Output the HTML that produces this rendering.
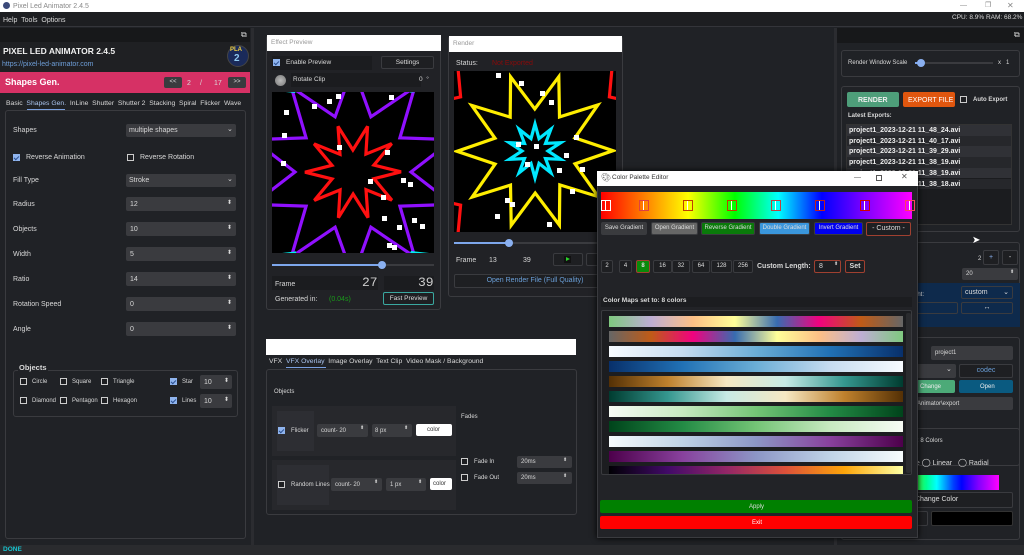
<!DOCTYPE html>
<html><head><meta charset="utf-8"><style>
*{margin:0;padding:0;box-sizing:border-box}
body{width:1024px;height:555px;overflow:hidden;background:#202226;font-family:"Liberation Sans",sans-serif;position:relative;color:#ddd}
div,span{position:absolute}
.t{font-size:7px;color:#d8d8d8;white-space:nowrap;line-height:1}
.b{font-weight:bold}
.box{border:1px solid #3a3b3f;border-radius:3px}
.in{background:#3a3b3f;border-radius:2px}
.ar{font-size:4px;line-height:3px;color:#ddd;text-align:center;width:6px}
.cb{width:7px;height:7px;border:1px solid #ccc;background:#1e1f22}
.cbk{width:7px;height:7px;background:#8fb4ee;border:1px solid #8fb4ee}
.cbk:after{content:"";position:absolute;left:1px;top:0px;width:2px;height:4px;border:solid #2a4f90;border-width:0 1px 1px 0;transform:rotate(45deg)}
.btn{border:1px solid #3a3b3f;border-radius:2px;background:#1e1f22;font-size:7px;color:#ddd;text-align:center;white-space:nowrap}
.stripe{left:7px;width:294px;height:11px}
</style></head><body>
<!-- title bar -->
<div style="left:0;top:0;width:1024px;height:12px;background:#fff"></div>
<div style="left:3px;top:2px;width:7px;height:7px;border-radius:50%;background:#3b4a7a"></div>
<div class="t" style="left:13px;top:3px;font-size:7px;color:#888">Pixel Led Animator 2.4.5</div>
<div class="t" style="left:960px;top:2px;color:#888">—</div>
<div class="t" style="left:985px;top:2px;color:#888">❐</div>
<div class="t" style="left:1007px;top:2px;color:#888;font-size:8px">✕</div>
<!-- menu -->
<div style="left:0;top:12px;width:1024px;height:15px;background:#1d1e21;border-bottom:1px solid #34353a"></div>
<div class="t" style="left:3px;top:17px">Help&nbsp; Tools&nbsp; Options</div>
<div class="t" style="left:952px;top:15px;font-size:6.5px">CPU: 8.9% RAM: 68.2%</div>

<!-- LEFT DOCK -->
<div style="left:0;top:28px;width:250px;height:14px;background:#17181a"></div>
<div class="t" style="left:241px;top:31px;font-size:8px">⧉</div>
<div style="left:0;top:42px;width:250px;height:30px;background:#1f2023"></div>
<div class="t b" style="left:3px;top:47px;font-size:8.5px;color:#f0f0f0">PIXEL LED ANIMATOR 2.4.5</div>
<div class="t" style="left:2px;top:61px;font-size:7px;color:#6e9ed8">https://pixel-led-animator.com</div>
<div style="left:227px;top:45px;width:22px;height:22px;border-radius:50%;background:#1a2a5a;border:1px solid #444"></div>
<div class="t b" style="left:230px;top:47px;font-size:6px;color:#f0d040">PLA</div>
<div class="t b" style="left:234px;top:54px;font-size:10px;color:#8fc8f0">2</div>
<div style="left:0;top:72px;width:250px;height:21px;background:#d63165"></div>
<div class="t b" style="left:5px;top:78px;font-size:9px;color:#fff">Shapes Gen.</div>
<div class="btn" style="left:164px;top:77px;width:18px;height:11px;background:#3a3b3f;border:none;line-height:11px;font-size:6px">&lt;&lt;</div>
<div class="t" style="left:187px;top:80px">2</div>
<div class="t" style="left:200px;top:80px">/</div>
<div class="t" style="left:214px;top:80px">17</div>
<div class="btn" style="left:228px;top:77px;width:18px;height:11px;background:#3a3b3f;border:none;line-height:11px;font-size:6px">&gt;&gt;</div>
<div class="t" style="left:6px;top:101px;font-size:6.8px">Basic&nbsp; <span style="position:static;color:#aac4ee">Shapes Gen.</span>&nbsp; InLine&nbsp; Shutter&nbsp; Shutter 2&nbsp; Stacking&nbsp; Spiral&nbsp; Flicker&nbsp; Wave</div>
<div style="left:27px;top:109px;width:38px;height:1px;background:#7aa0e0"></div>
<div class="box" style="left:5px;top:110px;width:241px;height:429px"></div>

<div class="t" style="left:13px;top:127px">Shapes</div>
<div class="in" style="left:126px;top:124px;width:110px;height:13px"></div>
<div class="t" style="left:129px;top:127px">multiple shapes</div>
<div class="t" style="left:227px;top:126px;font-size:7px">⌄</div>
<div class="cbk" style="left:13px;top:154px"></div>
<div class="t" style="left:26px;top:154px">Reverse Animation</div>
<div class="cb" style="left:127px;top:154px"></div>
<div class="t" style="left:140px;top:154px">Reverse Rotation</div>
<div class="t" style="left:13px;top:177px">Fill Type</div>
<div class="in" style="left:126px;top:174px;width:110px;height:13px"></div>
<div class="t" style="left:129px;top:177px">Stroke</div>
<div class="t" style="left:227px;top:176px">⌄</div>

<div id="spins"></div>

<div class="box" style="left:13px;top:370px;width:225px;height:47px"></div>
<div style="left:18px;top:364px;width:30px;height:8px;background:#202226"></div>
<div class="t b" style="left:19px;top:364px;font-size:7.5px">Objects</div>
<div id="objs"></div>

<div style="left:251px;top:28px;width:3px;height:517px;background:#2b2c30"></div>

<!-- EFFECT PREVIEW -->
<div class="box" style="left:266px;top:35px;width:175px;height:275px;background:#212226"></div>
<div style="left:267px;top:35px;width:174px;height:16px;background:#fff"></div>
<div class="t" style="left:271px;top:40px;color:#999;font-size:6.5px">Effect Preview</div>
<div style="left:272px;top:56px;width:100px;height:14px;background:#1b1c1f"></div>
<div class="cbk" style="left:273px;top:59px"></div>
<div class="t" style="left:286px;top:60px;font-size:6.5px">Enable Preview</div>
<div class="btn" style="left:381px;top:56px;width:53px;height:13px;line-height:11px;font-size:6.5px">Settings</div>
<div style="left:275px;top:75px;width:11px;height:11px;border-radius:50%;background:radial-gradient(#bbb,#777)"></div>
<div style="left:291px;top:73px;width:130px;height:14px;background:#1b1c1f"></div>
<div class="t" style="left:293px;top:77px;font-size:6.5px">Rotate Clip</div>
<div class="t" style="left:419px;top:77px;font-size:6.5px">0&nbsp; °</div>
<svg id="c1" style="position:absolute;left:272px;top:92px" width="162" height="161"></svg>
<div style="left:272px;top:264px;width:162px;height:2px;background:#3a3b3f"></div>
<div style="left:272px;top:264px;width:110px;height:2px;background:#7ea7ec"></div>
<div style="left:378px;top:261px;width:8px;height:8px;border-radius:50%;background:#8ab0f0"></div>
<div style="left:272px;top:276px;width:60px;height:14px;background:#1b1c1f"></div>
<div class="t" style="left:275px;top:281px">Frame</div>
<div style="left:328px;top:276px;width:50px;height:14px;background:#1b1c1f"></div>
<div class="t" style="left:362px;top:276px;font-family:'Liberation Mono',monospace;font-size:13px;color:#ccc">27</div>
<div style="left:384px;top:276px;width:50px;height:14px;background:#1b1c1f"></div>
<div class="t" style="left:418px;top:276px;font-family:'Liberation Mono',monospace;font-size:13px;color:#ccc">39</div>
<div class="t" style="left:275px;top:296px">Generated in:</div>
<div class="t" style="left:329px;top:296px;color:#1a9a1a">(0.04s)</div>
<div class="btn" style="left:383px;top:292px;width:51px;height:13px;line-height:11px;border-color:#3aa8a0;font-size:6.5px">Fast Preview</div>

<!-- RENDER -->
<div class="box" style="left:448px;top:36px;width:175px;height:261px;background:#212226"></div>
<div style="left:449px;top:36px;width:173px;height:16px;background:#fff"></div>
<div class="t" style="left:453px;top:41px;color:#999;font-size:6.5px">Render</div>
<div class="t" style="left:456px;top:60px">Status:</div>
<div class="t" style="left:492px;top:60px;color:#8a0a0a">Not Exported</div>
<svg id="c2" style="position:absolute;left:454px;top:71px" width="162" height="161"></svg>
<div style="left:454px;top:242px;width:168px;height:2px;background:#3a3b3f"></div>
<div style="left:454px;top:242px;width:55px;height:2px;background:#7ea7ec"></div>
<div style="left:505px;top:239px;width:8px;height:8px;border-radius:50%;background:#8ab0f0"></div>
<div class="t" style="left:456px;top:257px">Frame</div>
<div class="t" style="left:489px;top:257px">13</div>
<div class="t" style="left:523px;top:257px">39</div>
<div class="btn" style="left:553px;top:253px;width:30px;height:13px"></div>
<div style="left:564px;top:256px;width:7px;height:7px;background:#111"></div>
<div style="left:566px;top:257px;width:0;height:0;border-left:4px solid #2ad02a;border-top:2.5px solid transparent;border-bottom:2.5px solid transparent"></div>
<div class="btn" style="left:586px;top:253px;width:30px;height:13px"></div>
<div class="btn" style="left:454px;top:274px;width:162px;height:14px;line-height:12px;color:#6a9fd8">Open Render File (Full Quality)</div>

<!-- VFX -->
<div style="left:266px;top:339px;width:310px;height:16px;background:#fff"></div>
<div class="t" style="left:269px;top:359px;font-size:6.8px">VFX&nbsp; <span style="position:static;color:#aac4ee">VFX Overlay</span>&nbsp; Image Overlay&nbsp; Text Clip&nbsp; Video Mask / Background</div>
<div style="left:286px;top:367px;width:40px;height:1px;background:#7aa0e0"></div>
<div class="box" style="left:266px;top:369px;width:311px;height:146px"></div>
<div class="t" style="left:274px;top:389px;font-size:6px">Objects</div>
<div style="left:272px;top:406px;width:184px;height:50px;background:#27282c"></div>
<div style="left:277px;top:411px;width:37px;height:40px;background:#2d2e33"></div>
<div class="cbk" style="left:278px;top:427px"></div>
<div class="t" style="left:291px;top:428px;font-size:6px">Flicker</div>
<div class="in" style="left:317px;top:424px;width:51px;height:13px"></div>
<div class="t" style="left:321px;top:428px;font-size:6px">count- 20</div>
<div class="t" style="left:360px;top:426px;font-size:5px">⬍</div>
<div class="in" style="left:372px;top:424px;width:40px;height:13px"></div>
<div class="t" style="left:375px;top:428px;font-size:6px">8 px</div>
<div class="t" style="left:404px;top:426px;font-size:5px">⬍</div>
<div style="left:416px;top:424px;width:36px;height:12px;background:#fff;border-radius:2px"></div>
<div class="t" style="left:427px;top:427px;font-size:6px;color:#333">color</div>
<div style="left:272px;top:460px;width:184px;height:50px;background:#27282c"></div>
<div style="left:277px;top:465px;width:52px;height:40px;background:#2d2e33"></div>
<div class="cb" style="left:278px;top:481px"></div>
<div class="t" style="left:291px;top:482px;font-size:6px">Random Lines</div>
<div class="in" style="left:331px;top:478px;width:51px;height:13px"></div>
<div class="t" style="left:335px;top:482px;font-size:6px">count- 20</div>
<div class="t" style="left:374px;top:480px;font-size:5px">⬍</div>
<div class="in" style="left:386px;top:478px;width:40px;height:13px"></div>
<div class="t" style="left:390px;top:482px;font-size:6px">1 px</div>
<div class="t" style="left:418px;top:480px;font-size:5px">⬍</div>
<div style="left:430px;top:478px;width:22px;height:12px;background:#fff;border-radius:2px"></div>
<div class="t" style="left:433px;top:481px;font-size:6px;color:#333">color</div>
<div class="t" style="left:461px;top:414px;font-size:6px">Fades</div>
<div class="cb" style="left:461px;top:458px"></div>
<div class="t" style="left:474px;top:459px;font-size:6px">Fade In</div>
<div class="in" style="left:517px;top:456px;width:55px;height:12px"></div>
<div class="t" style="left:521px;top:459px;font-size:6px">20ms</div>
<div class="t" style="left:563px;top:458px;font-size:5px">⬍</div>
<div class="cb" style="left:461px;top:474px"></div>
<div class="t" style="left:474px;top:475px;font-size:6px">Fade Out</div>
<div class="in" style="left:517px;top:472px;width:55px;height:12px"></div>
<div class="t" style="left:521px;top:475px;font-size:6px">20ms</div>
<div class="t" style="left:563px;top:474px;font-size:5px">⬍</div>

<!-- RIGHT DOCK -->
<div style="left:834px;top:28px;width:3px;height:517px;background:#2b2c30"></div>
<div style="left:837px;top:28px;width:187px;height:15px;background:#17181a"></div>
<div class="t" style="left:1014px;top:31px;font-size:8px">⧉</div>
<div class="box" style="left:841px;top:50px;width:179px;height:27px"></div>
<div class="t" style="left:848px;top:60px;font-size:6px">Render Window Scale</div>
<div style="left:915px;top:62px;width:78px;height:2px;background:#3a3b3f"></div>
<div style="left:915px;top:62px;width:7px;height:2px;background:#7ea7ec"></div>
<div style="left:917px;top:59px;width:8px;height:8px;border-radius:50%;background:#8ab0f0"></div>
<div class="t" style="left:998px;top:60px;font-size:6px">x&nbsp;&nbsp; 1</div>
<div class="box" style="left:841px;top:86px;width:179px;height:146px"></div>
<div style="left:847px;top:92px;width:52px;height:15px;background:#4e9e7a;border-radius:2px"></div>
<div class="t b" style="left:858px;top:97px;font-size:7px;color:#eee">RENDER</div>
<div style="left:903px;top:92px;width:52px;height:15px;background:#e0560e;border-radius:2px"></div>
<div class="t" style="left:908px;top:97px;font-size:7px;color:#fff">EXPORT FILE</div>
<div class="cb" style="left:960px;top:96px"></div>
<div class="t b" style="left:973px;top:97px;font-size:6px">Auto Export</div>
<div class="t b" style="left:848px;top:113px;font-size:6px">Latest Exports:</div>
<div style="left:846px;top:124px;width:166px;height:101px;background:#1b1c1f;border:1px solid #333"></div>
<div id="exports"></div>
<div class="box" style="left:841px;top:242px;width:179px;height:85px"></div>
<div class="t" style="left:978px;top:256px;font-size:6px">2&nbsp;&nbsp; s</div>
<div class="btn" style="left:983px;top:250px;width:16px;height:15px;line-height:13px;color:#8ab0f0">+</div>
<div class="btn" style="left:1002px;top:250px;width:16px;height:15px;line-height:13px">-</div>
<div class="in" style="left:962px;top:268px;width:56px;height:12px"></div>
<div class="t" style="left:966px;top:271px;font-size:6px">20</div>
<div class="t" style="left:1010px;top:270px;font-size:5px">⬍</div>
<div style="left:912px;top:283px;width:108px;height:44px;background:#0e2a4c"></div>
<div class="t" style="left:914px;top:292px;font-size:6px">ght:</div>
<div class="btn" style="left:961px;top:286px;width:52px;height:13px;background:transparent;line-height:11px;text-align:left;padding-left:3px">custom<span style="right:3px;top:0">⌄</span></div>
<div class="btn" style="left:912px;top:302px;width:46px;height:12px;background:transparent;text-align:left;line-height:10px">0</div>
<div class="btn" style="left:961px;top:302px;width:52px;height:12px;background:transparent;line-height:10px">↔</div>
<div class="box" style="left:841px;top:337px;width:179px;height:129px"></div>
<div class="in" style="left:931px;top:346px;width:82px;height:14px"></div>
<div class="t" style="left:935px;top:350px;font-size:6px">project1</div>
<div class="in" style="left:910px;top:364px;width:46px;height:14px"></div>
<div class="t" style="left:946px;top:366px;font-size:7px">⌄</div>
<div class="btn" style="left:959px;top:364px;width:54px;height:14px;line-height:12px;color:#6a9fd8">codec</div>
<div style="left:912px;top:380px;width:43px;height:13px;background:#4caa78;border-radius:2px"></div>
<div class="t" style="left:920px;top:384px;font-size:6px;color:#eee">Change</div>
<div style="left:959px;top:380px;width:54px;height:13px;background:#0a5a80;border-radius:2px"></div>
<div class="t" style="left:980px;top:384px;font-size:6px;color:#eee">Open</div>
<div class="in" style="left:912px;top:397px;width:101px;height:13px"></div>
<div class="t" style="left:917px;top:401px;font-size:6px">Animator\export</div>
<div class="box" style="left:841px;top:428px;width:179px;height:112px"></div>
<div class="t" style="left:912px;top:438px;font-size:6px">th: 8 Colors</div>
<div class="t" style="left:912px;top:459px;font-size:7px">ge <span style="position:static;font-size:8px">◯</span> Linear&nbsp;&nbsp; <span style="position:static;font-size:8px">◯</span> Radial</div>
<div style="left:916px;top:475px;width:83px;height:15px;background:linear-gradient(90deg,#40ff40,#00ff90,#00ffff 25%,#0040ff 45%,#0000ff 55%,#8000ff 75%,#ff00ff)"></div>
<div class="btn" style="left:908px;top:492px;width:105px;height:16px;line-height:14px;text-align:left;padding-left:6px;font-size:7px">Change Color</div>
<div class="btn" style="left:905px;top:511px;width:23px;height:15px"></div>
<div style="left:931px;top:511px;width:82px;height:15px;background:#000;border:1px solid #333;border-radius:2px"></div>

<!-- cursor -->
<div class="t" style="left:972px;top:236px;font-size:10px;color:#fff">➤</div>

<!-- DIALOG -->
<div style="left:597px;top:171px;width:321px;height:367px;background:#222327;border:1px solid #3a3b3f;box-shadow:0 0 6px #000"></div>
<div style="left:597px;top:171px;width:321px;height:15px;background:#fff"></div>
<div class="t" style="left:601px;top:174px;font-size:8px;color:#555">🎨︎</div>
<div class="t" style="left:612px;top:175px;font-size:6.5px;color:#333">Color Palette Editor</div>
<div class="t" style="left:854px;top:174px;color:#555">—</div>
<div style="left:876px;top:175px;width:6px;height:6px;border:1px solid #555"></div>
<div class="t" style="left:901px;top:173px;font-size:8px;color:#555">✕</div>
<div style="left:601px;top:192px;width:311px;height:27px;background:linear-gradient(90deg,#ff0000,#ff8000 14%,#ffff00 28%,#00ff00 43%,#00ffff 57%,#0000ff 71%,#8000ff 85%,#ff00ff)"></div>
<div id="marks"></div>
<div class="btn" style="left:601px;top:222px;width:46px;height:13px;line-height:11px;background:#3a3b3e;font-size:6px">Save Gradient</div>
<div class="btn" style="left:651px;top:222px;width:47px;height:13px;line-height:11px;background:#666;font-size:6px">Open Gradient</div>
<div class="btn" style="left:701px;top:222px;width:54px;height:13px;line-height:11px;background:#0a7a0a;font-size:6px">Reverse Gradient</div>
<div class="btn" style="left:759px;top:222px;width:51px;height:13px;line-height:11px;background:#3a96dc;font-size:6px">Double Gradient</div>
<div class="btn" style="left:814px;top:222px;width:49px;height:13px;line-height:11px;background:#0000ee;font-size:6px">Invert Gradient</div>
<div class="btn" style="left:866px;top:222px;width:45px;height:14px;line-height:12px;border-color:#a04030;font-size:7px">- Custom -</div>
<div id="nums"></div>
<div class="t b" style="left:757px;top:263px;font-size:7px">Custom Length:</div>
<div class="btn" style="left:814px;top:260px;width:27px;height:13px;border-color:#a04030;text-align:left;padding-left:4px;line-height:11px">8</div>
<div class="t" style="left:834px;top:262px;font-size:5px">⬍</div>
<div class="btn" style="left:845px;top:260px;width:20px;height:13px;border-color:#a04030;line-height:11px;font-weight:bold">Set</div>
<div style="left:601px;top:297px;width:311px;height:10px;background:#1c1d20"></div>
<div class="t b" style="left:603px;top:298px;font-size:6.5px">Color Maps set to: 8 colors</div>
<div style="left:601px;top:310px;width:311px;height:165px;background:#1c1d20;border:1px solid #3a3b3f;border-radius:2px;overflow:hidden" id="maps"></div>
<div style="left:600px;top:500px;width:312px;height:13px;background:#008000;border-radius:2px"></div>
<div class="t" style="left:749px;top:504px;font-size:6px;color:#ddd">Apply</div>
<div style="left:600px;top:516px;width:312px;height:13px;background:#ff0000;border-radius:2px"></div>
<div class="t" style="left:752px;top:520px;font-size:6px;color:#fff">Exit</div>

<!-- status bar -->
<div style="left:0;top:545px;width:1024px;height:10px;background:#2a2b2e"></div>
<div class="t b" style="left:3px;top:547px;font-size:6.5px;color:#17c5d0">DONE</div>

<script>
function h(p,s){p.insertAdjacentHTML('beforeend',s)}
var sp=document.getElementById('spins');
[['Radius','12',204],['Objects','10',229],['Width','5',254],['Ratio','14',279],['Rotation Speed','0',304],['Angle','0',329]].forEach(function(r){
h(sp,'<div class="t" style="left:13px;top:'+(r[2]-3)+'px">'+r[0]+'</div><div class="in" style="left:126px;top:'+(r[2]-7)+'px;width:110px;height:14px"></div><div class="t" style="left:130px;top:'+(r[2]-3)+'px">'+r[1]+'</div><div class="t" style="left:227px;top:'+(r[2]-4)+'px;font-size:6px">⬍</div>')});
var ob=document.getElementById('objs');
[['Circle',20,382,0],['Square',60,382,0],['Triangle',101,382,0],['Diamond',20,401,0],['Pentagon',60,401,0],['Hexagon',101,401,0],['Star',170,382,1],['Lines',170,401,1]].forEach(function(o){
h(ob,'<div class="'+(o[3]?'cbk':'cb')+'" style="left:'+o[1]+'px;top:'+(o[2]-4)+'px"></div><div class="t" style="left:'+(o[1]+12)+'px;top:'+(o[2]-3)+'px;font-size:6px">'+o[0]+'</div>')});
[382,401].forEach(function(y){h(ob,'<div class="in" style="left:200px;top:'+(y-7)+'px;width:32px;height:14px"></div><div class="t" style="left:204px;top:'+(y-3)+'px">10</div><div class="t" style="left:224px;top:'+(y-4)+'px;font-size:6px">⬍</div>')});
var ex=document.getElementById('exports');
['11_48_24','11_40_17','11_39_29','11_38_19','11_38_19','11_38_18'].forEach(function(s,i){
h(ex,'<div style="left:847px;top:'+(125+i*10.7)+'px;width:164px;height:10.7px;background:'+(i%2?'#26272b':'#303136')+'"></div><div class="t b" style="left:849px;top:'+(127+i*10.7)+'px;font-size:7px;color:#eee">project1_2023-12-21 '+s+'.avi</div>')});
var mk=document.getElementById('marks');
[[601,'#fff'],[639,'#e04040'],[683,'#c04000'],[727,'#c04000'],[771,'#c04040'],[815,'#c02020'],[860,'#d00000'],[905,'#ff4060']].forEach(function(m){
h(mk,'<div style="left:'+m[0]+'px;top:200px;width:10px;height:11px;border:1px solid '+m[1]+'"></div><div style="left:'+(m[0]+4)+'px;top:201px;width:1px;height:9px;background:#fff"></div>')});
var nu=document.getElementById('nums');
[[601,12,'2'],[619,13,'4'],[636,14,'8'],[653,19,'16'],[672,18,'32'],[692,18,'64'],[711,21,'128'],[733,20,'256']].forEach(function(n){
h(nu,'<div class="btn" style="left:'+n[0]+'px;top:260px;width:'+n[1]+'px;height:13px;line-height:11px;font-size:6px;'+(n[2]=='8'?'background:#0a8a0a;border-color:#a04030;font-weight:bold':'')+'">'+n[2]+'</div>')});
var mp=document.getElementById('maps');
var g=[['#7fc97f','#beaed4','#fdc086','#ffff99','#386cb0','#f0027f','#bf5b17','#666666'],
['#f7fbff','#c6dbef','#6baed6','#2171b5','#08306b'],
['#543005','#bf812d','#f6e8c3','#c7eae5','#35978f','#003c30'],
['#f7fcf5','#c7e9c0','#74c476','#238b45','#00441b'],
['#f7fcfd','#bfd3e6','#8c96c6','#88419d','#4d004b']];
var L=[];g.forEach(function(a){L.push(a);L.push(a.slice().reverse())});
L.push(['#000004','#420a68','#932667','#dd513a','#fca50a','#fcffa4']);
L.forEach(function(a,i){h(mp,'<div class="stripe" style="top:'+(5+i*15)+'px;background:linear-gradient(90deg,'+a.join(',')+')"></div>')});
h(mp,'<div style="left:304px;top:2px;width:5px;height:160px;background:#2a2b2e;border-radius:2px"></div>');
function star(cx,cy,ro,ri,n,rot){var p=[];for(var i=0;i<2*n;i++){var a=rot+i*Math.PI/n,r=i%2?ri:ro;p.push((cx+r*Math.sin(a)).toFixed(1)+','+(cy-r*Math.cos(a)).toFixed(1))}return p.join(' ')}
function draw(id,list,sq){var s=document.getElementById(id),o='<rect width="162" height="161" fill="#000"/>';
list.forEach(function(l){o+='<polygon points="'+star(81,80,l[0],l[1],l[2],l[3])+'" fill="none" stroke="'+l[4]+'" stroke-width="3.2" stroke-linejoin="miter"/>'});
sq.forEach(function(q){o+='<rect x="'+q[0]+'" y="'+q[1]+'" width="5" height="5" fill="#fff"/>'});s.innerHTML=o}
draw('c1',[[48,22,10,0.31,'#ff1010'],[105,58,10,0,'#9010ff'],[150,100,10,0.31,'#00f0f0']],
[[55,7],[40,12],[12,18],[10,41],[64,2],[117,3],[65,53],[113,58],[9,69],[96,87],[129,86],[136,90],[109,103],[110,124],[140,126],[125,133],[148,132],[115,151],[120,153]]);
draw('c2',[[27,13,10,0,'#00e8ff'],[78,42,10,0.31,'#ffee00'],[135,92,10,0,'#ff1010']],
[[42,2],[65,10],[86,20],[95,29],[71,91],[120,64],[126,96],[62,71],[80,73],[110,82],[103,97],[116,118],[51,127],[56,131],[41,143],[93,151],[69,180]]);
</script>
</body></html>
